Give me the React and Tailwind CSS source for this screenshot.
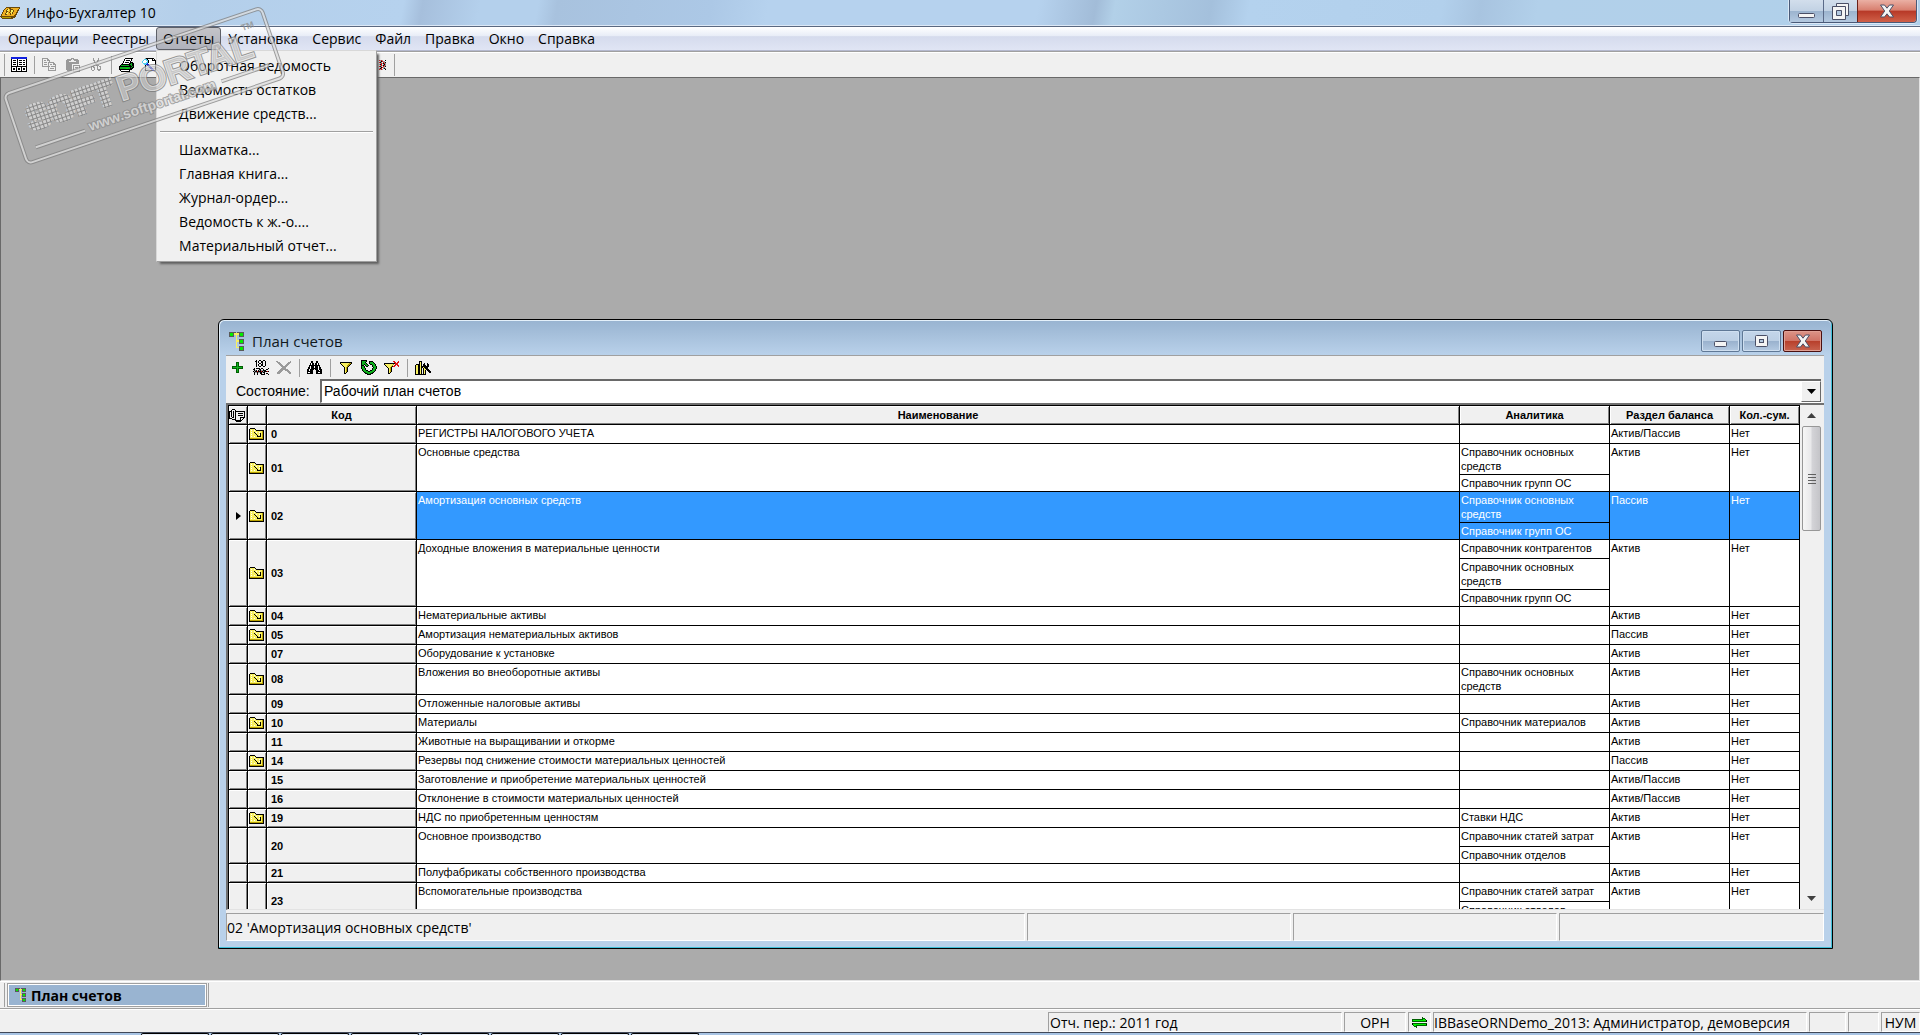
import React, { Component } from "react";

const PALETTE = {
  k: "#000000",
  w: "#ffffff",
  g: "#9a9a9a",
  d: "#5a5a5a",
  y: "#f8f060",
  o: "#b8a000",
  b: "#1020e0",
  c: "#50d0f0",
  n: "#006000",
  e: "#10b020",
  l: "#00ee00",
  r: "#e01010",
  m: "#6b4a08",
  a: "#f0b020",
};

const SPRITES = {
  ledger: [
    "bbbbbbbbbbbbbbbb",
    "bbbbbbbbbbbbbbbb",
    "kwwwwwkwwwwwwwwk",
    "kwkkkwkwkkkwkkwk",
    "kwwwwwkwwwwwwwwk",
    "kwkkkwkwkkkwkkwk",
    "kwwwwwkwwwwwwwwk",
    "kwkkkwkwkkkwkkwk",
    "kwwwwwkwwwwwwwwk",
    "kkkkkkkkkkkkkkkk",
    "kwwwwkwwwwkwwwwk",
    "kwkkwkwkkwkwkkwk",
    "kwkkwkwkkwkwkkwk",
    "kwwwwkwwwwkwwwwk",
    "kkkkkkkkkkkkkkkk",
  ],
  copy: [
    "gggggg.........",
    "g....gg........",
    "g.gg.ggg.......",
    "g......g.......",
    "g.ggg.gggggg...",
    "g.....g....gg..",
    "g.ggg.g.gg.ggg.",
    "g.....g......g.",
    "gggggggg.ggggg.",
    "......g......g.",
    "......g.gggg.g.",
    "......g......g.",
    "......gggggggg.",
  ],
  paste: [
    ".....ggg......",
    ".ggggg.ggggg..",
    "ggggg...ggggg.",
    "ggg.......ggg.",
    "ggggggggggggg.",
    "ggggggggggggg.",
    "gggggg........",
    "gggggg.ggggggg",
    "gggggg.g.....g",
    "gggggg.g.ggg.g",
    "gggggg.g.....g",
    "gggggg.g.ggg.g",
    ".ggggg.g.....g",
    ".......ggggggg",
  ],
  cut: [
    "..g....g..",
    "..g....g..",
    "..gg..gg..",
    "...g..g...",
    "...gggg...",
    "....gg....",
    "....gg....",
    "..gg.ggg..",
    "ggg...g.gg",
    "g.gg..g..g",
    "g..g..g..g",
    "g..g..gggg",
    ".gg....gg.",
  ],
  printer: [
    "......kkkkkkkk..",
    ".....kwwwwwwk...",
    ".....kwkkkkwk...",
    "....kwwwwwwk....",
    "....kwkkkkwkkk..",
    "...kwwwwwwkkekk.",
    "..kkkkkkkkkeekk.",
    ".keeeeeeeekkekk.",
    "kkkkkkkkkkkkkek.",
    "keeeeeeeeeekekk.",
    "keeeeeelleekkk..",
    "kkkkkkkkkkkkk...",
    ".kwwwwwwwwk.....",
    "..kkkkkkkkk.....",
  ],
  preview: [
    "...gkkkkkkkk...",
    "..ccckwwwwkwk..",
    ".cwwcckwwwkkkk.",
    "cwwwwckwwwwwwk.",
    "cwwwcckwwwwwwk.",
    ".ccccbwwwwwwwk.",
    "..ccbbbwwwwwwk.",
    "...kwbbbwwwwwk.",
    "...kwwbbbwwwwk.",
    "...kwwwbbbwwwk.",
    "...kwwwwbbbwwk.",
    "...kwwwwwbbbwk.",
    "...kkkkkkkbbkk.",
  ],
  tree: [
    "ddddd.ddddd",
    "dlldyyydlld",
    "dlld.y.dlld",
    "dddd.y.dddd",
    ".....y.....",
    ".....y.dddd",
    ".....yydlld",
    ".....y.dlld",
    ".....y.dddd",
    ".....y.....",
    ".....y.dddd",
    ".....yydlld",
    ".......dlld",
    ".......dddd",
  ],
  plus: [
    "....nnn....",
    "....nen....",
    "....nen....",
    "....nen....",
    "nnnnnennnnn",
    "neeeeeeeeen",
    "nnnnnennnnn",
    "....nen....",
    "....nen....",
    "....nen....",
    "....nnn....",
  ],
  renumber: [
    "...k..kk..kk....",
    "..kk.k..kk..k...",
    "...k.k..kk..k...",
    "...k..kk.k..k...",
    "...k.k..kk..k...",
    "...k.k..kk..k...",
    "...k..kk..kk....",
    "................",
    ".k.kkkk.kk.....k",
    "kk....kk..k..kk.",
    ".kgk.kgkggkkk...",
    "kgkkrkkkrkgkkkrk",
    ".kggkggkkgkk....",
    ".k..k..kk..k.kk.",
    ".k..k...kkkk...k",
  ],
  remove: [
    "gg............g.",
    ".ggg........ggg.",
    "..ggg......ggg..",
    "...ggg....ggg...",
    "....ggg..ggg....",
    ".....gggggg.....",
    "......gggg......",
    ".....ggggg......",
    "....gggggggg....",
    "...gggg..gggg...",
    "..gggg.....ggg..",
    ".gggg.......ggg.",
    ".ggg.........gg.",
  ],
  find: [
    "....kk...kk.....",
    "....kk...kk.....",
    "...kwkk.kkwk....",
    "...kwkk.kkwk....",
    "..kkkkkkkkkkk...",
    "..kwkkkwkkkwk...",
    ".kkwkkkwkkkwkk..",
    ".kkwkkkkkkkwkk..",
    "kkwkkkk.kkkwkkk.",
    "kkwkkk...kkkwkk.",
    "kkkkkk...kkkkkk.",
    "kwwkkk...kkwwkk.",
    "kkkkkk...kkkkkk.",
  ],
  filter: [
    "kkkkkkkkkkkk",
    "kyyyyyyyyook",
    ".kyyyyyyook.",
    "..kyyyyook..",
    "...kyyyok...",
    "....kyok....",
    "....kyok....",
    "....kyok....",
    "....kyok....",
    "....kyok....",
    "....kyk.....",
    "....kk......",
  ],
  refresh: [
    "kkkkkk..........",
    "keeeek..kkkk....",
    "keeek...keeek...",
    "keeeek..keeeek..",
    "keekeek..kkeeek.",
    "kkk.keek...keek.",
    "keek.kk....keeek",
    "keek........keek",
    "keeek......keeek",
    ".keek......keek.",
    ".keeekk..kkeeek.",
    "..keeeekkeeeek..",
    "...kneeeeeenk...",
    "....kkneenkk....",
    "......kkkk......",
  ],
  unfilter: [
    ".........rr...r.",
    "..........rr.rr.",
    "kkkkkkkkkkkrrr..",
    "kyyyyyyyyo.rrr..",
    ".kyyyyyyo.rr.rr.",
    "..kyyyyokrr...r.",
    "...kyyok........",
    "....kyok........",
    "....kyok........",
    "....kyok........",
    "....kyok........",
    "....kyk.........",
    "....kk..........",
  ],
  settings: [
    "....kkk.........",
    "....kyk.........",
    "....kyk..k..k...",
    ".kkkkyk.kk..kk..",
    "kyykkyk.kkk.kk..",
    "kyykkykkkkkkkk..",
    "kyykkykkykkkk...",
    "kyykkyk.kykkk...",
    "kyykkyk.kyykkk..",
    "kyykkyk.kyk.kkk.",
    "kyykkyk.kyk..kkk",
    "kyykkyk.kyk...kk",
    "kyykkyk.kyk.....",
    "kkkkkkkkkkk.....",
  ],
  folder: [
    ".kkkkk.........",
    "kyyyyyk........",
    "kywyywykkkkkkkk",
    "kyyyyyyyyyyyyok",
    "kywyykywyywyyok",
    "kyyyyykyyyykyok",
    "kywyyyykyywkyok",
    "kyyyyyyykyykyok",
    "kywyywyykkkkyok",
    "kyyyyyyyyyyyyok",
    "koooooooooooook",
    "kkkkkkkkkkkkkkk",
  ],
  clip: [
    "...kkk..........",
    "..k...k.........",
    "kkk.k.kkkkkkkkkk",
    "k.k.k.k........k",
    "k.k.k.k..kkkkk.k",
    "k.k.k.k........k",
    "k.k.k.k..kkkkk.k",
    "k.k.k.k........k",
    "k..kk.k....kkkkk",
    "kkk...k....k..k.",
    "...kkkk....k.k..",
    "......kkkkkkk...",
    ".......kkkkk....",
  ],
  swap: [
    "..........n....",
    "..........nnn..",
    "nnnnnnnnnnnlln.",
    "nlllllllllllllk",
    "nnnnnnnnnnnnnnk",
    "...............",
    "knnnnnnnnnnnnnn",
    "klllllllllllllk",
    ".nllnnnnnnnnnnn",
    "..nnn..........",
    "....n..........",
  ],
  coin: [
    "......mmmmmmmmmmmmmm",
    ".....maaammaaaaaaaam",
    "....maamyammmaaaaam.",
    "...maamyyamyymaaamm.",
    "...maammaamyymaaam..",
    "..maaamyamaymaaamm..",
    "..maamyyaamymaaam...",
    ".maaammaaamaaaamm...",
    ".maaaaaaaaaaaamm....",
    "mmmmmmmmmmmmmmmm....",
    ".mooooooooommmm.....",
    "..mmmmmmmmmmm.......",
  ],
  cross: [
    "rgrg.wk",
    ".gkrggw",
    "rkgwrgk",
    ".grgkrg",
    "gkrwgkg",
    ".grgkrg",
    "rkgwrgk",
    ".gkrggw",
    "gkrwgkg",
    "rgrg.wk",
  ],
};

const MENU = ["Операции", "Реестры", "Отчеты", "Установка", "Сервис", "Файл", "Правка", "Окно", "Справка"];

const REPORTS = [
  ["Оборотная ведомость", "Ведомость остатков", "Движение средств..."],
  ["Шахматка...", "Главная книга...", "Журнал-ордер...", "Ведомость к ж.-о....", "Материальный отчет..."],
];

const OS = "Справочник основных средств";
const OS_GROUPS = "Справочник групп ОС";

const ACCOUNTS = [
  { code: "0", name: "РЕГИСТРЫ НАЛОГОВОГО УЧЕТА", refs: [], section: "Актив/Пассив", folder: true },
  { code: "01", name: "Основные средства", refs: [OS, OS_GROUPS], section: "Актив", folder: true },
  { code: "02", name: "Амортизация основных средств", refs: [OS, OS_GROUPS], section: "Пассив", folder: true },
  { code: "03", name: "Доходные вложения в материальные ценности", refs: ["Справочник контрагентов", OS, OS_GROUPS], section: "Актив", folder: true },
  { code: "04", name: "Нематериальные активы", refs: [], section: "Актив", folder: true },
  { code: "05", name: "Амортизация нематериальных активов", refs: [], section: "Пассив", folder: true },
  { code: "07", name: "Оборудование к установке", refs: [], section: "Актив" },
  { code: "08", name: "Вложения во внеоборотные активы", refs: [OS], section: "Актив", folder: true },
  { code: "09", name: "Отложенные налоговые активы", refs: [], section: "Актив" },
  { code: "10", name: "Материалы", refs: ["Справочник материалов"], section: "Актив", folder: true },
  { code: "11", name: "Животные на выращивании и откорме", refs: [], section: "Актив" },
  { code: "14", name: "Резервы под снижение стоимости материальных ценностей", refs: [], section: "Пассив", folder: true },
  { code: "15", name: "Заготовление и приобретение материальных ценностей", refs: [], section: "Актив/Пассив" },
  { code: "16", name: "Отклонение в стоимости материальных ценностей", refs: [], section: "Актив/Пассив" },
  { code: "19", name: "НДС по приобретенным ценностям", refs: ["Ставки НДС"], section: "Актив", folder: true },
  { code: "20", name: "Основное производство", refs: ["Справочник статей затрат", "Справочник отделов"], section: "Актив" },
  { code: "21", name: "Полуфабрикаты собственного производства", refs: [], section: "Актив" },
  { code: "23", name: "Вспомогательные производства", refs: ["Справочник статей затрат", "Справочник отделов"], section: "Актив" },
];

const Sprite = ({ name, className = "" }) => {
  const rows = SPRITES[name];
  const width = Math.max(...rows.map((row) => row.length));
  return (
    <svg width={width} height={rows.length} viewBox={`0 0 ${width} ${rows.length}`} shapeRendering="crispEdges" className={`block shrink-0 ${className}`} aria-hidden="true">
      {rows.map((row, y) => [...row].map((ch, x) => (ch === "." ? null : <rect key={`${x}-${y}`} x={x} y={y} width="1" height="1" fill={PALETTE[ch]} />)))}
    </svg>
  );
};

const ToolButton = ({ name, label }) => (
  <button type="button" aria-label={label} className="flex h-5 w-[23px] shrink-0 items-center justify-center">
    <Sprite name={name} />
  </button>
);

const Divider = () => <span className="ml-1 mr-[3px] h-[18px] w-px shrink-0 bg-[#a0a0a0]" />;

const Panel = ({ className, children }) => <div className={`flex items-center overflow-hidden whitespace-nowrap border border-b-white border-l-[#a0a0a0] border-r-white border-t-[#a0a0a0] ${className}`}>{children}</div>;

const MinimizeGlyph = () => (
  <svg width="17" height="16" aria-hidden="true">
    <rect x=".5" y="10.500" width="16" height="4" rx="1" fill="#f4f4f4" stroke="#4a4f66" />
  </svg>
);

const CloseGlyph = () => (
  <svg width="16" height="14" viewBox="0 0 16 14" aria-hidden="true">
    <path d="M1.500 1h4L8 4.200 10.500 1h4l-4.200 6 4.200 6h-4L8 9.800 5.500 13h-4l4.200-6z" fill="#f4f4f4" stroke="#4a4f66" strokeLinejoin="round" />
  </svg>
);

const Watermark = () => (
  <svg width="300" height="170" viewBox="0 0 300 170" className="pointer-events-none absolute left-0 top-0 z-30" aria-hidden="true">
    <defs>
      <pattern id="dots" width="4" height="4" patternUnits="userSpaceOnUse">
        <rect width="4" height="4" fill="#7c7c7c" />
        <rect width="3" height="3" fill="#dcdcdc" />
      </pattern>
    </defs>
    <g transform="rotate(-18.700 3 94)" opacity="0.75">
      <rect x="4" y="95" width="271" height="73" rx="5" fill="none" stroke="#808080" strokeWidth="4" />
      <rect x="4" y="95" width="271" height="73" rx="5" fill="none" stroke="#dedede" strokeWidth="2" />
      <g className="font-['Liberation_Sans',Arial,sans-serif] font-bold">
        <text x="18" y="138" fontSize="34" fill="url(#dots)" stroke="url(#dots)" strokeWidth="4">
          SOFT
        </text>
        <text x="113" y="139" fontSize="35" fill="#c4c4c4" fillOpacity="0.5" stroke="#787878" strokeWidth="3" paintOrder="stroke">
          PORTAL
        </text>
        <text x="113" y="139" fontSize="35" fill="#c8c8c8" fillOpacity="0.6" stroke="#e4e4e4" strokeWidth="1">
          PORTAL
        </text>
        <text x="250" y="111" fontSize="9" fill="#8c8c8c">
          TM
        </text>
        <text x="74" y="157" fontSize="14" fill="#dcdcdc" stroke="#8a8a8a" strokeWidth="2" paintOrder="stroke">
          www.softportal.com
        </text>
      </g>
      <path d="M17 155h52M214 152h50" stroke="#808080" strokeWidth="4" />
      <path d="M17 155h52M214 152h50" stroke="#dedede" strokeWidth="2" />
    </g>
  </svg>
);

class App extends Component {
  constructor(props) {
    super(props);
    this.state = {
      openMenu: "Отчеты",
      selected: "02",
    };
  }

  toggleMenu = (name) => {
    this.setState((prevState) => ({ openMenu: prevState.openMenu === name ? null : name }));
  };

  renderTitleBar = () => {
    return (
      <header className="flex h-[26px] shrink-0 items-start justify-between border-b border-[#dce8f6] bg-[linear-gradient(100deg,#c6daee_0%,#b4cfea_10%,#b6d2ee_21%,#a6bfdc_22%,#b4d0ec_25%,#b4d0ec_28%,#a8c2de_29%,#acc8e6_37%,#b6d2ee_40%,#b6d2ee_54%,#a2bcd8_57%,#b2d0e8_58%,#a4c0dc_63%,#b4d2ee_65%,#b2d0ec_75%,#a8c4e0_77%,#b2d0ea_80%,#b0d0ea_100%)]">
        <div className="flex h-[26px] items-center gap-[6px]">
          <Sprite name="coin" />
          <h1 className="text-[14px] leading-5 text-black">Инфо-Бухгалтер 10</h1>
        </div>
        <div className="mr-[3px] flex h-[23px] rounded-b-[4px] border border-t-0 border-[#4a5a78] shadow-[0_0_0_1px_#dbe8f6]">
          <button type="button" aria-label="Свернуть" className="flex w-[34px] items-center justify-center border-r border-[#5a6a88] bg-[linear-gradient(#d2deec_0%,#c2d2e4_48%,#9cb4cf_52%,#b4c9e0_100%)]">
            <MinimizeGlyph />
          </button>
          <button type="button" aria-label="Восстановить" className="flex w-[33px] items-center justify-center bg-[linear-gradient(#d2deec_0%,#c2d2e4_48%,#9cb4cf_52%,#b4c9e0_100%)]">
            <svg width="18" height="17" aria-hidden="true">
              <path d="M4.500 .5h12v12h-12z" fill="#f4f4f4" stroke="#4a4f66" />
              <path d="M.5 3.500h13v13H.5z" fill="#f4f4f4" stroke="#4a4f66" />
              <path d="M4.500 7.500h5v5h-5z" fill="#b4c9e0" stroke="#4a4f66" />
            </svg>
          </button>
          <button type="button" aria-label="Закрыть" className="flex w-[59px] items-center justify-center rounded-br-[3px] border-l border-[#6a2018] bg-[linear-gradient(#eab0a4_0%,#d88070_45%,#b83a28_52%,#d06048_100%)]">
            <CloseGlyph />
          </button>
        </div>
      </header>
    );
  };

  renderReports = () => {
    return (
      <div role="menu" className="absolute left-0 top-full z-20 w-[221px] border border-[#d8d8d8] border-b-[#a0a0a0] border-r-[#a0a0a0] bg-[#f0f0f0] py-[3px] shadow-[3px_3px_2px_-1px_#606060]">
        {REPORTS.map((group, index) => (
          <div key={index} role="group">
            {index > 0 && <hr className="mx-[3px] mb-[6px] mt-[5px] border-t border-[#a0a0a0] shadow-[0_1px_0_#ffffff]" />}
            {group.map((item) => (
              <button key={item} type="button" role="menuitem" className="block h-6 w-full whitespace-nowrap pl-[22px] text-left text-[14px] leading-6 hover:bg-[#d5e5f8]">
                {item}
              </button>
            ))}
          </div>
        ))}
      </div>
    );
  };

  renderMenuBar = () => {
    const { openMenu } = this.state;
    return (
      <nav className="flex h-[25px] shrink-0 items-stretch border-b border-t border-b-[#b4b8ce] border-t-[#5a6880] bg-[linear-gradient(#ffffff_0%,#e8edf7_38%,#d5dbed_42%,#e0e5f4_100%)] pl-px">
        {MENU.map((name) => (
          <div key={name} className="relative flex">
            <button
              type="button"
              aria-expanded={openMenu === name}
              onClick={() => this.toggleMenu(name)}
              className={`whitespace-nowrap rounded-[3px] border px-[6px] text-[14px] leading-5 ${openMenu === name ? "border-[#5e6068] bg-[linear-gradient(#c4c4c8,#b0b2bc)]" : "border-transparent"}`}
            >
              {name}
            </button>
            {name === "Отчеты" && openMenu === name && this.renderReports()}
          </div>
        ))}
      </nav>
    );
  };

  renderToolbar = () => {
    return (
      <div className="flex h-[26px] shrink-0 items-center border-t border-[#a0a0a0] bg-[#f0f0f0] pl-1 shadow-[inset_0_1px_0_#ffffff]">
        <span className="mr-[2px] h-[22px] w-px bg-[#a0a0a0]" />
        <ToolButton name="ledger" label="Журнал" />
        <Divider />
        <ToolButton name="copy" label="Копировать" />
        <ToolButton name="paste" label="Вставить" />
        <ToolButton name="cut" label="Вырезать" />
        <Divider />
        <ToolButton name="printer" label="Печать" />
        <ToolButton name="preview" label="Просмотр" />
        <div className="ml-[210px] flex items-center">
          <ToolButton name="cross" label="Параметры" />
          <span className="h-[22px] w-px bg-[#a0a0a0]" />
        </div>
      </div>
    );
  };

  renderRow = (account) => {
    const active = account.code === this.state.selected;
    const bevel = "border-b border-r border-black bg-[#f0f0f0] p-0 shadow-[inset_1px_1px_0_#ffffff,inset_-1px_-1px_0_#808080]";
    const cell = "border-b border-r border-black px-px pb-0 pt-px align-top";
    return (
      <tr key={account.code} onClick={() => this.setState({ selected: account.code })} className={`h-[19px] ${active ? "bg-[#3399ff] text-white" : "bg-white"}`}>
        <td className={bevel}>
          {active && (
            <svg width="5" height="8" className="ml-[7px] block" aria-hidden="true">
              <path d="M0 0l5 4-5 4z" />
            </svg>
          )}
        </td>
        <td className={`${bevel} pl-px`}>{account.folder && <Sprite name="folder" />}</td>
        <th scope="row" className={`${bevel} pl-1 text-left align-middle text-black`}>
          {account.code}
        </th>
        <td className={cell}>{account.name}</td>
        <td className="border-b border-r border-black p-0 align-top">
          {account.refs.map((ref, index) => (
            <div key={ref} className={`pb-px pl-px pr-2 pt-px ${index < account.refs.length - 1 ? "min-h-[19px] border-b border-black" : ""}`}>
              {ref}
            </div>
          ))}
        </td>
        <td className={cell}>{account.section}</td>
        <td className={cell}>Нет</td>
      </tr>
    );
  };

  renderTable = () => {
    const head = "border-b border-r border-black bg-[#f0f0f0] p-0 text-center align-middle shadow-[inset_1px_1px_0_#ffffff,inset_-1px_-1px_0_#808080]";
    return (
      <div className="flex min-h-0 flex-1 overflow-hidden border-b border-l-2 border-t-2 border-b-[#e3e3e3] border-l-[#707070] border-t-[#707070]">
        <div className="min-h-0 min-w-0 flex-1 overflow-hidden border-l border-t border-black">
          <table className="w-full table-fixed border-separate border-spacing-0 font-['Liberation_Sans',Arial,sans-serif] text-[11px] leading-[14px]">
            <colgroup>
              <col className="w-[19px]" />
              <col className="w-[19px]" />
              <col className="w-[150px]" />
              <col />
              <col className="w-[150px]" />
              <col className="w-[120px]" />
              <col className="w-[70px]" />
            </colgroup>
            <thead>
              <tr className="h-[19px]">
                <th className={head}>
                  <Sprite name="clip" />
                </th>
                <th className={head}></th>
                <th className={head}>Код</th>
                <th className={head}>Наименование</th>
                <th className={head}>Аналитика</th>
                <th className={head}>Раздел баланса</th>
                <th className={head}>Кол.-сум.</th>
              </tr>
            </thead>
            <tbody>{ACCOUNTS.map(this.renderRow)}</tbody>
          </table>
        </div>
        <div className="ml-[2px] mr-[3px] flex w-[19px] shrink-0 flex-col items-center bg-[#f0f0f0]">
          <button type="button" aria-label="Вверх" className="flex h-[21px] w-full items-center justify-center">
            <svg width="9" height="5" aria-hidden="true">
              <path d="M0 5l4.500-5L9 5z" fill="#404040" />
            </svg>
          </button>
          <div className="flex h-[105px] w-full flex-col items-center justify-center gap-[2px] rounded-[2px] border border-[#979797] bg-[linear-gradient(90deg,#f6f6f6_0%,#e8e8ea_48%,#d4d4d8_52%,#c4c4c8_100%)]">
            <span className="h-px w-2 bg-[#606060]" />
            <span className="h-px w-2 bg-[#606060]" />
            <span className="h-px w-2 bg-[#606060]" />
            <span className="h-px w-2 bg-[#606060]" />
          </div>
          <button type="button" aria-label="Вниз" className="mt-auto flex h-[21px] w-full items-center justify-center">
            <svg width="9" height="5" aria-hidden="true">
              <path d="M0 0h9L4.500 5z" fill="#404040" />
            </svg>
          </button>
        </div>
      </div>
    );
  };

  renderWindow = () => {
    const button = "flex h-[22px] w-[39px] items-center justify-center rounded-[2px] border border-[#5f7896] bg-[linear-gradient(#c4d6ea_0%,#bccfe4_48%,#9ab2ce_52%,#b4cae2_100%)] shadow-[inset_0_0_0_1px_#cfdff0]";
    return (
      <section className="absolute bottom-[31px] left-[217px] right-[86px] top-[241px] flex flex-col rounded-t-[6px] border border-black bg-[#b9d1ea] pb-[7px] pl-[7px] pr-[8px] shadow-[inset_-1px_-1px_0_#40c0d8,inset_1px_1px_0_#e4f0fa]">
        <div className="-ml-[6px] -mr-[7px] mt-px flex h-[34px] shrink-0 items-center justify-between rounded-t-[5px] bg-[linear-gradient(#99b4d1,#b9d1ea)] pl-[9px] pr-[9px] pt-[6px]">
          <div className="flex items-center gap-2">
            <Sprite name="tree" className="h-[19px] w-[15px]" />
            <h2 className="text-[15px] leading-5 text-[#101820]">План счетов</h2>
          </div>
          <div className="flex gap-[2px]">
            <button type="button" aria-label="Свернуть окно" className={button}>
              <svg width="13" height="12" aria-hidden="true">
                <rect x=".5" y="6.500" width="12" height="5" rx="1" fill="#f4f4f4" stroke="#4a4f66" />
              </svg>
            </button>
            <button type="button" aria-label="Развернуть окно" className={button}>
              <svg width="13" height="12" aria-hidden="true">
                <rect x=".5" y=".5" width="12" height="11" rx="1" fill="#f4f4f4" stroke="#4a4f66" />
                <rect x="4.500" y="4.500" width="4" height="3" fill="#b4c9e0" stroke="#4a4f66" />
              </svg>
            </button>
            <button type="button" aria-label="Закрыть окно" className="flex h-[22px] w-[39px] items-center justify-center rounded-[2px] border border-[#4a1010] bg-[linear-gradient(#dc9488_0%,#d07466_48%,#b8402c_52%,#c86450_100%)] shadow-[inset_0_0_0_1px_#e0a094]">
              <CloseGlyph />
            </button>
          </div>
        </div>
        <div className="flex min-h-0 flex-1 flex-col border-t border-[#a0a0a0] bg-[#f0f0f0]">
          <div className="flex h-[23px] shrink-0 items-center">
            <ToolButton name="plus" label="Добавить" />
            <ToolButton name="renumber" label="Изменить код" />
            <ToolButton name="remove" label="Удалить" />
            <Divider />
            <ToolButton name="find" label="Найти" />
            <Divider />
            <ToolButton name="filter" label="Фильтр" />
            <ToolButton name="refresh" label="Обновить" />
            <ToolButton name="unfilter" label="Снять фильтр" />
            <Divider />
            <ToolButton name="settings" label="Настройка" />
          </div>
          <div className="flex h-[24px] shrink-0 items-stretch pr-[3px] font-['Liberation_Sans',Arial,sans-serif] text-[14px]">
            <label htmlFor="plan-state" className="w-[94px] self-center pl-[10px]">
              Состояние:
            </label>
            <div className="relative flex flex-1 border-b border-l-2 border-t-2 border-b-white border-l-[#696969] border-t-[#696969] bg-white">
              <select id="plan-state" className="w-full appearance-none bg-white pl-[2px] outline-none">
                <option>Рабочий план счетов</option>
              </select>
              <span className="pointer-events-none absolute bottom-0 right-0 top-0 flex w-5 items-center justify-center border border-b-[#696969] border-l-white border-r-[#696969] border-t-white bg-[#f0f0f0]">
                <svg width="9" height="5" aria-hidden="true">
                  <path d="M0 0h9L4.500 5z" />
                </svg>
              </span>
            </div>
          </div>
          {this.renderTable()}
          <footer className="mt-[3px] flex h-[28px] shrink-0 gap-[2px] text-[14px]">
            <Panel className="flex-1">02 'Амортизация основных средств'</Panel>
            <Panel className="w-[264px]" />
            <Panel className="w-[264px]" />
            <Panel className="w-[265px]" />
          </footer>
        </div>
      </section>
    );
  };

  renderStatusBar = () => {
    return (
      <footer className="flex h-[23px] shrink-0 justify-end gap-[2px] border-t border-white bg-[#f0f0f0] pt-[2px] text-[14px]">
        <Panel className="w-[294px] pl-px">Отч. пер.: 2011 год</Panel>
        <Panel className="w-[62px] justify-center">ОРН</Panel>
        <Panel className="w-[23px] justify-center">
          <Sprite name="swap" />
        </Panel>
        <Panel className="w-[374px]">IBBaseORNDemo_2013: Администратор, демоверсия</Panel>
        <Panel className="w-[37px]" />
        <Panel className="w-[31px]" />
        <Panel className="w-[39px] justify-center">НУМ</Panel>
      </footer>
    );
  };

  render() {
    return (
      <main className="relative flex h-screen flex-col overflow-hidden bg-[#f0f0f0] font-['Open_Sans','Noto_Sans',sans-serif] text-black">
        {this.renderTitleBar()}
        {this.renderMenuBar()}
        {this.renderToolbar()}
        <div className="relative min-h-0 flex-1 border border-b-[#e3e3e3] border-l-[#696969] border-r-[#e3e3e3] border-t-[#696969] bg-[#ababab]">{this.renderWindow()}</div>
        <div className="flex h-[28px] shrink-0 items-stretch border-b border-t border-b-[#a0a0a0] border-t-white pb-px pt-px">
          <span className="mr-[2px] w-[5px] border-r border-[#a0a0a0]" />
          <button type="button" className="flex w-[200px] items-center gap-[5px] border border-[#a0a0a0] bg-[#99b4d1] pl-[7px] text-[14px] font-bold shadow-[inset_0_0_0_1px_#ffffff]">
            <Sprite name="tree" />
            План счетов
          </button>
          <span className="ml-px w-px bg-[#a0a0a0]" />
        </div>
        {this.renderStatusBar()}
        <div className="flex h-[3px] shrink-0 gap-[2px] border-t border-[#404858] bg-[#a8c4e4] pl-[141px]">
          {[1, 2, 3, 4, 5, 6, 7, 8].map((tab) => (
            <span key={tab} className="w-[68px] rounded-t-[2px] border-x border-t border-black bg-[#e8f0fa]" />
          ))}
        </div>
        <Watermark />
      </main>
    );
  }
}

export default App;
